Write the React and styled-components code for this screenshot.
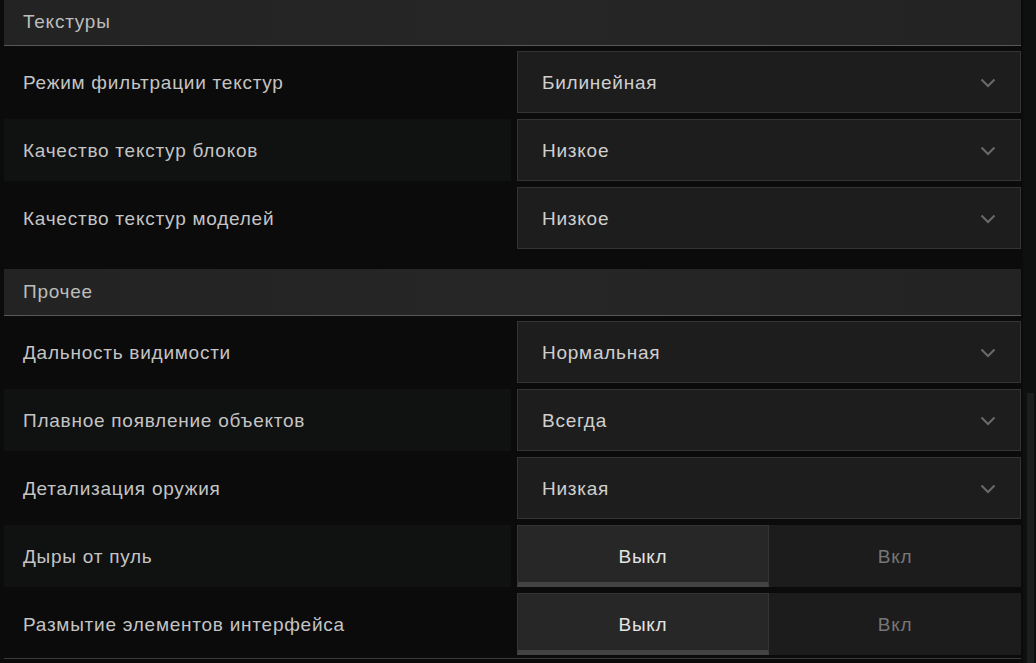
import React from 'react'
import styled, { createGlobalStyle } from 'styled-components'

const GlobalStyle = createGlobalStyle`
    html, body {
        margin:     0;
        padding:    0;
        background: #0b0b0b;
        overflow:   hidden;
    }

    body {
        font-family:    "Liberation Sans", Arial, sans-serif;
        letter-spacing: 0.75px;
    }
`

const Page = styled.div`
    display:    flex;
    height:     663px;
    width:      1036px;
    background: #0b0b0b;
    overflow:   hidden;
`

const Content = styled.div`
    flex:           1;
    display:        flex;
    flex-direction: column;
    padding:        0 2px 0 4px;
    margin-top:     -1px;
`

const ScrollTrack = styled.div`
    width:      13px;
    background: #0e1010;
    display:    flex;
    padding:    0 2px 0 4px;
    box-sizing: border-box;
`

const ScrollThumb = styled.div`
    width:      7px;
    margin-top: 393px;
    background: #1b1e1d;
    flex:       none;
`

const Section = styled.section`
    display:        flex;
    flex-direction: column;
    gap:            6px;
    margin-bottom:  20px;
`

const SectionHeader = styled.div`
    height:        46px;
    display:       flex;
    align-items:   center;
    padding-left:  19px;
    background:    linear-gradient(90deg, #232323, #262626 50%, #232323);
    border-bottom: 1px solid #585858;
    color:         #bdbdbd;
    font-size:     19px;
    margin-bottom: -1px;
`

const Row = styled.div`
    display:               grid;
    grid-template-columns: 507px 1fr;
    column-gap:            6px;
    height:                62px;
`

const Label = styled.div`
    display:      flex;
    align-items:  center;
    padding-left: 19px;
    padding-top:  2px;
    color:        #c4c4c4;
    font-size:    19px;
    background:   ${p => (p.striped ? '#101111' : 'transparent')};
`

const Select = styled.div`
    display:         flex;
    align-items:     center;
    justify-content: space-between;
    padding:         2px 24px 0 24px;
    background:      #1d1d1d;
    border:          1px solid #343434;
    color:           #cfcfcf;
    font-size:       19px;
`

const Toggle = styled.div`
    display:               grid;
    grid-template-columns: 1fr 1fr;
    background:            #1c1c1c;
`

const ToggleOption = styled.div`
    display:         flex;
    align-items:     center;
    justify-content: center;
    font-size:       19px;
    color:           ${p => (p.active ? '#e4e4e4' : '#767676')};
    background:      ${p => (p.active ? '#272727' : 'transparent')};
    border:          ${p => (p.active ? '1px solid #343434' : 'none')};
    border-bottom:   ${p => (p.active ? '5px solid #434343' : 'none')};
    padding-top:     ${p => (p.active ? '6px' : '2px')};
`

const BottomLine = styled.div`
    height:     1px;
    background: #3c3c3c;
    margin-top: -17px;
`

const Chevron = () => (
    <svg width="16" height="10" viewBox="0 0 16 10" fill="none">
        <path d="M1.5 1.5 L8 8 L14.5 1.5" stroke="#6a6a6a" strokeWidth="2" />
    </svg>
)

const sections = [
    {
        title: 'Текстуры',
        rows: [
            { label: 'Режим фильтрации текстур', value: 'Билинейная' },
            { label: 'Качество текстур блоков', value: 'Низкое' },
            { label: 'Качество текстур моделей', value: 'Низкое' },
        ],
    },
    {
        title: 'Прочее',
        rows: [
            { label: 'Дальность видимости', value: 'Нормальная' },
            { label: 'Плавное появление объектов', value: 'Всегда' },
            { label: 'Детализация оружия', value: 'Низкая' },
            { label: 'Дыры от пуль', toggle: true },
            { label: 'Размытие элементов интерфейса', toggle: true },
        ],
    },
]

const SettingRow = ({ row, striped }) => (
    <Row>
        <Label striped={striped}>{row.label}</Label>
        {
            row.toggle
                ? (
                    <Toggle>
                        <ToggleOption active>Выкл</ToggleOption>
                        <ToggleOption>Вкл</ToggleOption>
                    </Toggle>
                )
                : (
                    <Select>
                        <span>{row.value}</span>
                        <Chevron />
                    </Select>
                )
        }
    </Row>
)

const App = () => (
    <Page>
        <GlobalStyle />
        <Content>
            {
                sections.map(section => (
                    <Section key={section.title}>
                        <SectionHeader>{section.title}</SectionHeader>
                        {
                            section.rows.map((row, i) => (
                                <SettingRow key={row.label} row={row} striped={i % 2 === 1} />
                            ))
                        }
                    </Section>
                ))
            }
            <BottomLine />
        </Content>
        <ScrollTrack>
            <ScrollThumb />
        </ScrollTrack>
    </Page>
)

export default App
